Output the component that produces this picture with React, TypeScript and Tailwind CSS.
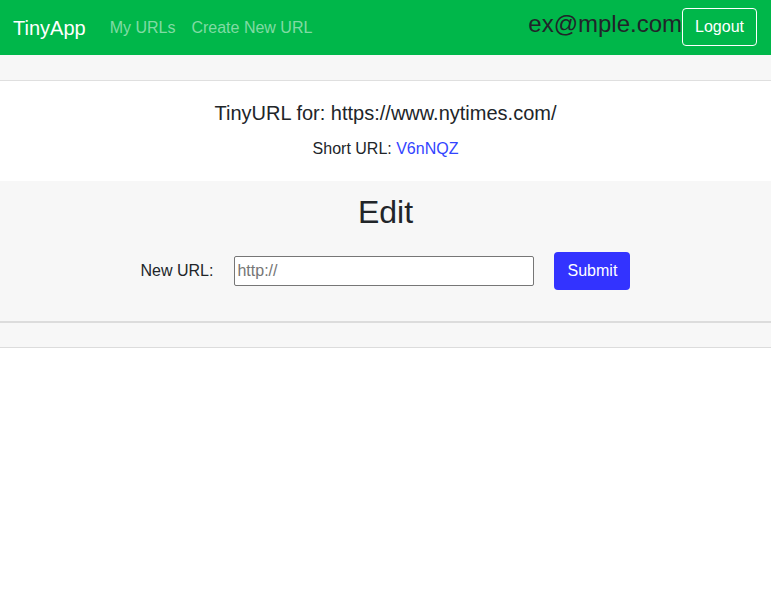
import React from 'react';

export default function App() {
  return (
    <div className="min-h-screen bg-white text-[#212529] font-['Liberation_Sans',Arial,sans-serif]">
      {/* Navbar */}
      <nav className="h-[55px] bg-[#00b74a] flex items-center pl-[13px] pr-[14px]">
        <span className="text-[20px] text-white mr-[24px]">TinyApp</span>
        <div className="flex items-center gap-[16px] text-[16px] text-[#80dba4]">
          <span>My URLs</span>
          <span>Create New URL</span>
        </div>
        <div className="ml-auto flex items-start h-full pt-[8px]">
          <span className="text-[24px] leading-[28px] text-[#212529] mt-[2px]">ex@mple.com</span>
          <button className="h-[38px] px-[12px] border border-white rounded-[4px] text-white text-[16px]">
            Logout
          </button>
        </div>
      </nav>

      {/* Card */}
      <div className="h-[26px] bg-[#f7f7f7] border-b border-[#dfdfdf]" />
      <div className="flex flex-col items-center pt-[20px] pb-[20px]">
        <h2 className="text-[20px] leading-[24px]">TinyURL for: https://www.nytimes.com/</h2>
        <p className="mt-[12px] text-[16px] leading-[24px]">
          Short URL: <a className="text-[#3344ff]">V6nNQZ</a>
        </p>
      </div>

      {/* Edit section */}
      <div className="bg-[#f7f7f7] flex flex-col items-center pt-[12px] pb-[31px]">
        <h1 className="text-[32px] leading-[38px]">Edit</h1>
        <form className="mt-[21px] flex items-center" onSubmit={(e) => e.preventDefault()}>
          <label className="text-[16px] mr-[21px]">New URL:</label>
          <input
            type="text"
            placeholder="http://"
            className="w-[300px] h-[30px] bg-white border border-[#767676] rounded-[2px] px-[2px] text-[16px] placeholder:text-[#757575] outline-none"
          />
          <button className="ml-[20px] w-[76px] h-[38px] bg-[#3333ff] text-white rounded-[4px] text-[16px]">
            Submit
          </button>
        </form>
      </div>
      <div className="h-[27px] bg-[#f7f7f7] border-t-2 border-b border-[#dcdcdc]" />
    </div>
  );
}
